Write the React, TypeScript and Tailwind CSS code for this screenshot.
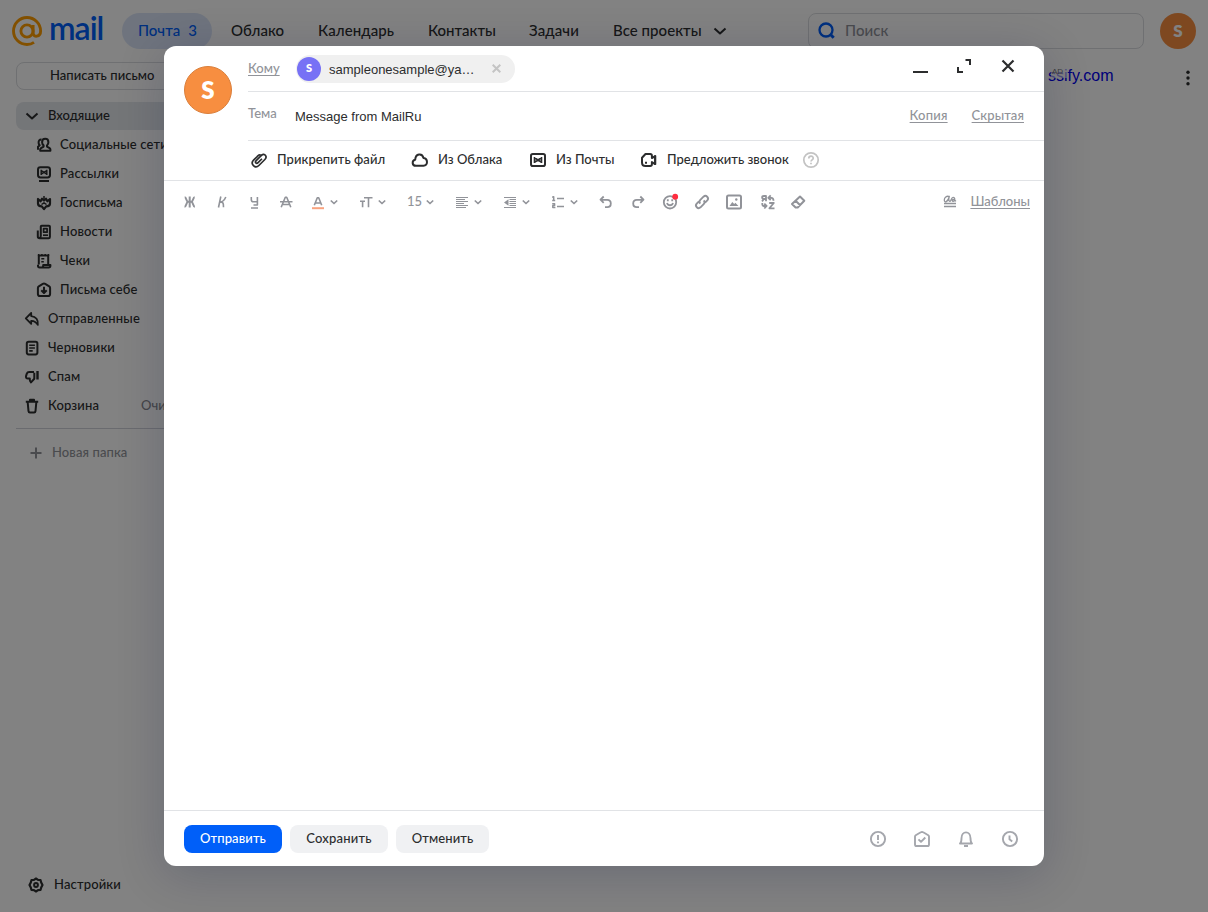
import React from "react";

type IconProps = { children: React.ReactNode; className?: string; box?: string; sw?: number };

function Icon({ children, className = "w-5 h-5", box = "0 0 20 20", sw = 2 }: IconProps) {
  return (
    <svg viewBox={box} className={"shrink-0 " + className} fill="none" stroke="currentColor" strokeWidth={sw} strokeLinecap="butt" strokeLinejoin="round">
      {children}
    </svg>
  );
}

const icons = {
  social: (
    <>
      <path d="M11.200 3.800c2 0 3.200 1.400 3.200 3.400 0 1.400-.6 2.500-1.400 3.200v1.200l2.600 1.600c.5.300.8.800.8 1.300v1.300H6.200v-1.300c0-.5.3-1 .8-1.300l2.600-1.600v-1.200C8.700 9.700 8.100 8.600 8.100 7.200c0-2 1.100-3.400 3.100-3.400z" />
      <path d="M7.500 4.600C5.500 4.400 4.400 6 4.600 7.900c.1 1.200.5 1.800 1.100 2.400L4 11.800v3" />
    </>
  ),
  news: (
    <>
      <rect x="4" y="3.200" width="12" height="10.300" rx="2.400" />
      <path d="M7.200 11V5.700M12.800 11V5.700M7.200 6.500L10 8.300l2.800-1.800M7.200 10.200L10 8.300l2.800 1.900" strokeWidth="1.400" />
      <path d="M5 17h10" />
    </>
  ),
  gov: (
    <>
      <path d="M4 6v4.500c0 2 1.500 2.800 3.800 2.800L10 16.200l2.200-2.900c2.300 0 3.800-.8 3.800-2.800V6l-2.600 2.300L12 5.700 10 7.500 8 5.700 6.600 8.300z" strokeWidth="2.200" />
      <path d="M10 3v4.500M7.500 11.500L10 9.800l2.500 1.700" strokeWidth="1.500" />
    </>
  ),
  paper: (
    <>
      <path d="M6.800 14V4.600c0-.6.3-.9.900-.9h7.300c.6 0 .9.300.9.900v10.400c0 .8-.5 1.300-1.300 1.300H5.700c-1.100 0-1.900-.700-1.900-1.800V8.500M6.800 13.500c0 1.300-.4 2.300-1.100 2.800" />
      <rect x="9.600" y="6.700" width="3.500" height="3.500" strokeWidth="1.700" />
      <path d="M9 13.200h5" strokeWidth="1.700" />
    </>
  ),
  receipt: (
    <>
      <path d="M4.800 13.500V4.500h9.400v8.500M4 13.800v1c0 1 .6 1.700 1.600 1.700h9c1 0 1.800-.7 1.800-1.700v-.9H9.200v.9c0 1-.6 1.700-1.500 1.700" />
      <path d="M4.600 2.900v2M7.900 2.900v2M11.200 2.900v2M14.500 2.900v2" strokeWidth="1.500" />
      <path d="M7.300 7.800h3M7.300 10.800h2.500" strokeWidth="1.600" />
    </>
  ),
  self: (
    <>
      <path d="M3.900 8c0-.7.3-1.200.9-1.600l4-2.500c.8-.5 1.600-.5 2.400 0l4 2.500c.6.400.9.900.9 1.600v6c0 1.300-.8 2.100-2.100 2.100H6C4.700 16.100 3.900 15.300 3.900 14z" />
      <path d="M10 6.800v6M7.300 10.300l2.700 2.700 2.700-2.700" />
    </>
  ),
  sent: <path d="M9.200 4L3.800 9.400l5.400 5.500v-3.100c3.200-.2 4.800 1 6.600 4.100.6-4.800-1.700-8.500-6.600-8.800z" strokeWidth="1.800" />,
  draft: (
    <>
      <rect x="4.800" y="3.800" width="10.600" height="12.600" rx="1.800" />
      <path d="M7.200 7.200h5.700M7.200 10h5.700M7.200 12.900h3.500" strokeWidth="1.600" />
    </>
  ),
  spam: (
    <>
      <path d="M12 5H7.200C6 5 5.200 5.500 4.800 6.600l-.7 2.300c-.5 1.600.3 2.600 1.800 2.600h1.900c-.2 1.500 0 2.900 1.200 3.900l3.300-3.600V5.800" />
      <path d="M15.500 4v8.500" strokeWidth="2.400" />
    </>
  ),
  trash: <path d="M3.800 5.700h12.400M8 5.500V3.800h4v1.700M5.700 6.500l.8 8.600c.1.800.6 1.300 1.400 1.300h4.200c.8 0 1.300-.5 1.400-1.300l.8-8.600" />,
  clip: (
    <g transform="rotate(45 10 10)">
      <path d="M6.300 8.500v5.500c0 5.200 7.500 5.200 7.500 0V5.500c0-4.300-5.300-4.300-5.300-1M8.500 4v8.500c0 2.400 2.700 2.400 2.700 0V7M6.300 9V7.500c0-1.300.8-2 1.800-2.300" strokeWidth="1.700" />
    </g>
  ),
  cloud: <path d="M6 15.800c-4.300 0-4.300-5.300-.8-6C5.600 3.300 12.200 3 13.500 8c4.600.6 4.700 7.800 0 7.800z" />,
  mail: (
    <>
      <rect x="3" y="4" width="14" height="12" rx="1.800" />
      <path d="M6.500 13V7M13.500 13V7M6.500 7.800L10 10l3.500-2.200M6.500 12.200L10 10l3.500 2.200" strokeWidth="1.600" />
    </>
  ),
  call: (
    <>
      <path d="M6.500 4h4.700c1 0 1.700.7 1.700 1.700v2.400l3.200-2v8l-3.200-2v2.200c0 1-.7 1.700-1.700 1.700H6.500C4.500 16 3 14.500 3 12.500V7.800z" />
      <path d="M6 12.800h2M16.200 5.500v9.300" />
    </>
  ),
  gear: (
    <>
      <path d="M8 4.800L10 3.500l2 1.300 2.500.2.700 2.500L16.500 10l-1.300 2.500-.7 2.500-2.500.2-2 1.300-2-1.300-2.500-.2-.7-2.500L3.500 10l1.300-2.500.7-2.500z" strokeWidth="2.200" />
      <circle cx="10" cy="10" r="1.900" />
    </>
  ),
};

function Folder({ icon, label, sub }: { icon: React.ReactNode; label: string; sub?: boolean }) {
  return (
    <div className={"flex h-[29px] items-center gap-[6px] text-[13px] tracking-[0.150px] " + (sub ? "pl-[34px]" : "pl-[22px]")}>
      <Icon>{icon}</Icon>
      <span className="whitespace-nowrap">{label}</span>
    </div>
  );
}

function Chevron({ className = "w-2 h-2" }: { className?: string }) {
  return (
    <Icon className={className} box="0 0 16 16" sw={2}>
      <path d="M2.500 5.500L8 10.500l5.500-5" />
    </Icon>
  );
}

function Header() {
  return (
    <header className="flex h-[62px] items-center text-[15px]">
      <div className="flex w-[110px] items-center pl-3">
        <svg viewBox="0 0 32 32" className="h-8 w-8 text-[#ff9e00]" fill="none" stroke="currentColor" strokeWidth="2.900">
          <circle cx="15" cy="16" r="6.100" />
          <path d="M21.100 10v7.800c0 5 7.500 4.600 7.500-1.800C28.600 8.500 22.500 2.500 15 2.500S1.500 8.500 1.500 16 7.500 29.500 15 29.500c2.700 0 5-.7 7-2.100" />
        </svg>
        <span className="-mt-[7px] ml-[5px] font-['Lato'] text-[32px] leading-8 font-semibold tracking-[-1px] text-[#005ff9]">mail</span>
      </div>
      <nav className="flex flex-1 items-center">
        <span className="ml-3 flex h-9 w-[90px] items-center gap-2 rounded-full bg-[#d9e4f8] pl-4 text-[#005ff9]">
          <span className="pb-px">Почта</span>
          <span className="pb-px">3</span>
        </span>
        <span className="ml-[19px] w-[87px] pb-px">Облако</span>
        <span className="w-[110px] pb-px tracking-[0.100px]">Календарь</span>
        <span className="w-[101px] pb-px">Контакты</span>
        <span className="w-[84px] pb-px tracking-[0.100px]">Задачи</span>
        <span className="w-[99px] pb-px tracking-[0.050px] whitespace-nowrap">Все проекты</span>
        <Chevron className="h-4 w-4" />
      </nav>
      <div className="flex h-9 w-[336px] items-center gap-2 rounded-lg border border-[#dadce0] pl-2 text-[#919399]">
        <Icon className="h-5 w-5 text-[#005ff9]" sw={2.300}>
          <circle cx="9" cy="9" r="6.500" />
          <path d="M13.500 13.500l3.200 3.200" strokeWidth="3" />
        </Icon>
        <span className="pb-px tracking-[0.100px]">Поиск</span>
      </div>
      <div className="mr-3 ml-4 flex h-9 w-9 items-center justify-center rounded-full bg-[#f78e40] pb-px text-[17px] font-extrabold text-white">S</div>
    </header>
  );
}

function Sidebar() {
  return (
    <aside className="flex w-[232px] flex-col">
      <div className="ml-4 flex h-7 items-center rounded-lg border border-[#dadce0] pl-[33px] text-[13px] tracking-[0.050px]">Написать письмо</div>
      <div className="mt-3 ml-4 flex h-7 items-center gap-2 rounded-lg bg-[#e4e7ec] pl-2 text-[13px]">
        <Chevron className="h-4 w-4" />
        <span>Входящие</span>
      </div>
      <Folder sub icon={icons.social} label="Социальные сети" />
      <Folder sub icon={icons.news} label="Рассылки" />
      <Folder sub icon={icons.gov} label="Госписьма" />
      <Folder sub icon={icons.paper} label="Новости" />
      <Folder sub icon={icons.receipt} label="Чеки" />
      <Folder sub icon={icons.self} label="Письма себе" />
      <Folder icon={icons.sent} label="Отправленные" />
      <Folder icon={icons.draft} label="Черновики" />
      <Folder icon={icons.spam} label="Спам" />
      <div className="flex items-center">
        <div className="w-[141px]">
          <Folder icon={icons.trash} label="Корзина" />
        </div>
        <span className="pt-px text-[13px] text-[#87898f]">Очистить</span>
      </div>
      <div className="mt-[8px] ml-4 border-t border-[#d0d3da]" />
      <div className="mt-[10px] flex h-7 items-center gap-[10px] pl-[30px] text-[13px] tracking-[0.100px] text-[#919399]">
        <Icon className="h-3 w-3" box="0 0 12 12" sw={2}>
          <path d="M6 .5v11M.5 6h11" />
        </Icon>
        <span>Новая папка</span>
      </div>
      <div className="mt-auto mb-[17px] flex items-center gap-2 pl-[26px] text-[13px] tracking-[0.150px]">
        <Icon>{icons.gear}</Icon>
        <span>Настройки</span>
      </div>
    </aside>
  );
}

function Tool({ w, children }: { w: string; children: React.ReactNode }) {
  return <div className={"flex items-center " + w}>{children}</div>;
}

function MenuChevron() {
  return (
    <Icon className="ml-[2px] h-2 w-2" box="0 0 8 8" sw={1.700}>
      <path d="M.8 2.500L4 5.500l3.200-3" />
    </Icon>
  );
}

function Toolbar() {
  return (
    <div className="flex h-[42px] items-center pl-[16px] text-[#919399]">
      <Tool w="w-8"><Icon sw={2}><path d="M9.700 4.500v11M4.700 5.200c2 0 1.300 4.600 3.500 4.600-2.200 0-1.500 5-3.700 5M14.700 5.200c-2 0-1.300 4.600-3.500 4.600 2.200 0 1.500 5 3.700 5M7.500 9.800h4.500" /></Icon></Tool>
      <Tool w="w-8"><Icon sw={1.600}><path d="M8.800 4.500L6.500 15.500M13.800 5c-1.500 3.500-2.700 5-5.800 5 3.200 0 3.500 1 3.500 5.200" /></Icon></Tool>
      <Tool w="w-8"><Icon sw={1.600}><path d="M7.300 5v2.500c0 1.500.5 2.300 2 2.300h4M13.400 5v8H9.500M7 16h7" /></Icon></Tool>
      <Tool w="w-8"><Icon sw={1.600}><path d="M5.200 15.200L9.300 5.300h1.400l4.100 9.900M7 12.500h6M4 9.800h12.500" /></Icon></Tool>
      <Tool w="w-12">
        <Icon sw={1.600}><path d="M6.300 13.300l3-7.500h1.400l3 7.500M7.500 11h5" /><path d="M4 16.200h12" stroke="#f9a37f" strokeWidth="2" /></Icon>
        <MenuChevron />
      </Tool>
      <Tool w="w-12">
        <Icon sw={1.600}><path d="M8 5.800h8.500M12.500 5.800v9.400M4 9.300h5M6.600 9.300v5.900" /></Icon>
        <MenuChevron />
      </Tool>
      <Tool w="w-12">
        <span className="w-5 pb-px pl-[3px] text-[13px]">15</span>
        <MenuChevron />
      </Tool>
      <Tool w="w-12">
        <Icon sw={1.100}><path d="M4 5.500h12M4 7.500h9M4 9.500h12M4 11.500h8M4 13.500h12M4 15.500h10" /></Icon>
        <MenuChevron />
      </Tool>
      <Tool w="w-12">
        <Icon sw={1.100}><path d="M4 5.500h12M9.500 7.500H16M9.500 9.500H16M9.500 11.500H16M9.500 13.500H16M4 15.500h12" /><path d="M8.500 7.300v6.400L4 10.500z" fill="currentColor" stroke="none" /></Icon>
        <MenuChevron />
      </Tool>
      <Tool w="w-12">
        <Icon sw={1.500}><path d="M9 6.500h7M9 14.500h7M4.200 5.200l1.500-.5v4M4.200 8.500h3M4.200 11.800h2.400v1.600H4.800v2h2.600" /></Icon>
        <MenuChevron />
      </Tool>
      <Tool w="w-8"><Icon sw={1.800}><path d="M4.500 7.800h6.700c4.800 0 4.800 7.400 0 7.400H9M7.700 4.500L4.500 7.700l3.200 3.100" /></Icon></Tool>
      <Tool w="w-8"><Icon sw={1.800}><path d="M15.500 7.800H8.800c-4.800 0-4.800 7.400 0 7.400H11M12.300 4.500l3.200 3.200-3.200 3.100" /></Icon></Tool>
      <Tool w="w-8"><Icon sw={1.800}><circle cx="10" cy="10.300" r="6.200" /><path d="M7 11c1 3 5 3 6 0M7.800 7.300v2M12.200 7.300v2" /><circle cx="15.200" cy="4.700" r="2.900" fill="#ff2c3f" stroke="none" /></Icon></Tool>
      <Tool w="w-8"><Icon sw={1.900}><path d="M8.300 11.700c-1.400-1.400-1.200-2.600 0-3.800l3.200-3.200c2.600-2.300 6 1.200 3.800 3.700l-2 2M11.700 8.300c1.400 1.400 1.200 2.600 0 3.800l-3.200 3.200c-2.600 2.300-6-1.200-3.800-3.700l2-2" /></Icon></Tool>
      <Tool w="w-[34px]"><Icon sw={2}><rect x="3" y="3.600" width="14" height="13" rx="1.500" /><path d="M5.500 14l2.800-4 1.900 2 1.200-1.200 3 3.200z" fill="currentColor" stroke="none" /><circle cx="12.300" cy="7.500" r="1.200" fill="currentColor" stroke="none" /></Icon></Tool>
      <Tool w="w-[30px]"><Icon sw={1.800}><path d="M8 9.300V4H6C3.500 4 3.500 7 6 7h2M6 7L4 9.300M10.500 5.800h2.800c1.500 0 2.200.8 2.200 3M12.700 3.300l-2.400 2.500 2.400 2.300M4.300 11v1.500c0 1 .5 1.500 1.500 1.500h2.500M6.300 11.700L8.600 14l-2.300 2.500M11.200 11h4.600l-4.400 5.300H16.500" /></Icon></Tool>
      <Tool w="w-8"><Icon sw={2}><path d="M12 4.500l4.300 4.300-6.600 6.700H7.600L4 12zM7.600 8.700l4.600 4.600" /></Icon></Tool>
      <div className="ml-auto flex items-center pr-[14px] text-[13px]">
        <Icon className="mr-[10px] h-5 w-5" sw={1.300}><path d="M9.400 4.500C6.500 3.500 4.300 5.500 4.300 8c0 3 3.500 2.500 5-3.500-1 3-.5 5 .8 4.800 1.300-.3 1-4 3-4 2.300 0 2 4 .3 4-1.500 0-1.500-1.800 0-1.800 1 0 1.500.5 2.500 1.800M4 11.500h12M4 14.500h12" /></Icon>
        <span className="pb-px underline underline-offset-2">Шаблоны</span>
      </div>
    </div>
  );
}

function Compose() {
  return (
    <section className="absolute top-[46px] left-[164px] flex h-[820px] w-[880px] flex-col rounded-xl bg-white shadow-[0_8px_48px_rgba(0,16,61,0.200)]">
      <div className="flex">
        <div className="w-[84px] pt-5 pl-5">
          <div className="flex h-12 w-12 items-center justify-center rounded-full border border-[#da7f3b] bg-[#f78e40] pb-px text-[24px] font-extrabold text-white">S</div>
        </div>
        <div className="flex-1">
          <div className="flex h-[46px] items-center border-b border-[#e1e3e6]">
            <span className="w-12 text-[13px] text-[#919399] underline underline-offset-2">Кому</span>
            <div className="flex h-7 w-[219px] items-center rounded-full bg-[#f0f0f0] pl-px">
              <span className="flex h-6 w-6 items-center justify-center rounded-full bg-[#7771f5] text-[11px] font-extrabold text-white">S</span>
              <span className="ml-2 w-[163px] pt-[2px] font-['Liberation_Sans'] text-[13px]">sampleonesample@ya…</span>
              <Icon className="h-[9px] w-[9px] text-[#c4c4c4]" box="0 0 9 9" sw={2}><path d="M.7.700l7.600 7.600M8.300.700L.7 8.300" /></Icon>
            </div>
            <div className="mr-[28px] mb-[6px] ml-auto flex items-center gap-7">
              <Icon className="h-4 w-4" box="0 0 16 16"><path d="M1 14h15" /></Icon>
              <Icon className="h-4 w-4" box="0 0 16 16"><path d="M9.500 2H14v5M2 9v5h5" strokeLinejoin="miter" /></Icon>
              <Icon className="h-4 w-4" box="0 0 16 16"><path d="M2.500 2.500l11 11M13.500 2.500l-11 11" strokeWidth="2.200" /></Icon>
            </div>
          </div>
          <div className="flex h-[49px] items-center border-b border-[#e1e3e6] text-[13px]">
            <span className="mb-1 w-[47px] text-[#919399]">Тема</span>
            <span className="pt-px font-['Liberation_Sans'] text-[13px]">Message from MailRu</span>
            <div className="mr-5 ml-auto flex gap-6 text-[#919399] underline underline-offset-2">
              <span className="tracking-[0.200px]">Копия</span>
              <span className="tracking-[0.100px]">Скрытая</span>
            </div>
          </div>
        </div>
      </div>
      <div className="flex h-[40px] items-center border-b border-[#e1e3e6] pb-px pl-[85px] text-[13px] whitespace-nowrap">
        <Icon>{icons.clip}</Icon>
        <span className="ml-2 w-[133px] tracking-[0.070px]">Прикрепить файл</span>
        <Icon>{icons.cloud}</Icon>
        <span className="ml-2 w-[90px]">Из Облака</span>
        <Icon>{icons.mail}</Icon>
        <span className="ml-2 w-[83px]">Из Почты</span>
        <Icon>{icons.call}</Icon>
        <span className="ml-2 w-[134px]">Предложить звонок</span>
        <Icon className="h-5 w-5 text-[#c3c3c3]" sw={1.700}><circle cx="10" cy="10" r="7.200" /><path d="M7.800 8.500c0-3 4.400-3 4.400-.3 0 1.600-2.200 1.700-2.200 3.300M10 12.800v1.500" /></Icon>
      </div>
      <Toolbar />
      <div className="flex-1" />
      <div className="flex h-14 items-center border-t border-[#e1e3e6] pl-5 text-[13px] tracking-[0.100px]">
        <span className="flex h-7 w-[98px] items-center justify-center rounded-lg bg-[#005ff9] text-white">Отправить</span>
        <span className="ml-2 flex h-7 w-[98px] items-center justify-center rounded-lg bg-[#f0f1f3] tracking-[0.200px]">Сохранить</span>
        <span className="ml-2 flex h-7 w-[93px] items-center justify-center rounded-lg bg-[#f0f1f3]">Отменить</span>
        <div className="mr-6 ml-auto flex gap-6 text-[#a5a7ad]">
          <Icon sw={1.900}><circle cx="10" cy="10" r="7.100" /><path d="M10 6v5M10 12.500v1.800" /></Icon>
          <Icon sw={1.900}><path d="M3 7.500c0-.6.3-.9.700-1.200l5.100-3c.8-.5 1.600-.5 2.400 0l5.100 3c.4.300.7.600.7 1.200v7.900c0 1-.6 1.600-1.600 1.600H4.600c-1 0-1.600-.6-1.600-1.600zM6.500 10.300l2.500 2.500 4.300-4.300" /></Icon>
          <Icon sw={1.900}><path d="M4 14.500c1.500-1 1.500-2.500 1.500-5.300 0-7.800 9-7.800 9 0 0 2.800 0 4.300 1.500 5.300zM8 17h4" /></Icon>
          <Icon sw={1.900}><circle cx="10" cy="10" r="7.100" /><path d="M9.500 6.500v3.800l2.700 2.200" /></Icon>
        </div>
      </div>
    </section>
  );
}

export default function App() {
  return (
    <div className="relative flex h-[912px] w-[1208px] flex-col overflow-hidden bg-white font-['Lato','Open_Sans',sans-serif] font-medium text-[#2c2d2e]">
      <Header />
      <div className="flex flex-1">
        <Sidebar />
        <div className="relative ml-auto flex h-8 w-[160px] items-center font-['Liberation_Sans'] text-base font-normal text-[#0000ee]">
          <span className="-mt-1">ssify.com</span>
          <span className="absolute top-1 left-[3px] flex h-3 w-[16px] items-center bg-white/60 pl-px text-[8px] text-[#777]">AD</span>
          <span className="mr-2 ml-auto flex h-6 w-6 items-center justify-center">
            <Icon className="h-5 w-5 text-[#2c2d2e]"><g fill="currentColor" stroke="none"><circle cx="10" cy="4.200" r="1.700" /><circle cx="10" cy="10" r="1.700" /><circle cx="10" cy="15.800" r="1.700" /></g></Icon>
          </span>
        </div>
      </div>
      <div className="absolute inset-0 bg-black/49" />
      <Compose />
    </div>
  );
}
